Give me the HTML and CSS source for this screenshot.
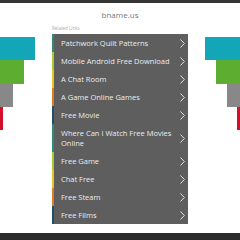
FILE: index.html
```html
<!DOCTYPE html>
<html>
<head>
<meta charset="utf-8">
<link rel="stylesheet" href="styles.css">
</head>
<body>
<div class="page">
  <div class="topbar"></div>
  <div class="title">bname.us</div>
  <div class="main">
    <div class="side side-left">
      <div class="bar cyan w35"></div>
      <div class="bar green w24"></div>
      <div class="bar gray w13"></div>
      <div class="bar red w3"></div>
    </div>
    <div class="center">
      <div class="label">Related Links</div>
      <ul class="links">
        <li class="c1"><span>Patchwork Quilt Patterns</span><svg viewBox="0 0 5 9"><polyline points="0.5,0.5 4.3,4.5 0.5,8.5"/></svg></li>
        <li class="c2"><span>Mobile Android Free Download</span><svg viewBox="0 0 5 9"><polyline points="0.5,0.5 4.3,4.5 0.5,8.5"/></svg></li>
        <li class="c3"><span>A Chat Room</span><svg viewBox="0 0 5 9"><polyline points="0.5,0.5 4.3,4.5 0.5,8.5"/></svg></li>
        <li class="c4"><span>A Game Online Games</span><svg viewBox="0 0 5 9"><polyline points="0.5,0.5 4.3,4.5 0.5,8.5"/></svg></li>
        <li class="c5"><span>Free Movie</span><svg viewBox="0 0 5 9"><polyline points="0.5,0.5 4.3,4.5 0.5,8.5"/></svg></li>
        <li class="c1"><span>Where Can I Watch Free Movies Online</span><svg viewBox="0 0 5 9"><polyline points="0.5,0.5 4.3,4.5 0.5,8.5"/></svg></li>
        <li class="c2"><span>Free Game</span><svg viewBox="0 0 5 9"><polyline points="0.5,0.5 4.3,4.5 0.5,8.5"/></svg></li>
        <li class="c3"><span>Chat Free</span><svg viewBox="0 0 5 9"><polyline points="0.5,0.5 4.3,4.5 0.5,8.5"/></svg></li>
        <li class="c4"><span>Free Steam</span><svg viewBox="0 0 5 9"><polyline points="0.5,0.5 4.3,4.5 0.5,8.5"/></svg></li>
        <li class="c5"><span>Free Films</span><svg viewBox="0 0 5 9"><polyline points="0.5,0.5 4.3,4.5 0.5,8.5"/></svg></li>
      </ul>
    </div>
    <div class="side side-right">
      <div class="bar cyan w35"></div>
      <div class="bar green w24"></div>
      <div class="bar gray w13"></div>
      <div class="bar red w3"></div>
    </div>
  </div>
  <div class="footer"></div>
</div>
</body>
</html>
```
FILE: styles.css
```css
html, body {
  margin: 0;
  padding: 0;
  background: #fff;
}
.page {
  width: 240px;
  height: 240px;
  display: flex;
  flex-direction: column;
  font-family: "Open Sans", "DejaVu Sans", sans-serif;
  overflow: hidden;
}
.topbar {
  height: 3px;
  background: #353535;
}
.title {
  height: 20px;
  line-height: 20px;
  margin-top: 2px;
  text-align: center;
  font-size: 8px;
  color: #777;
}
.main {
  display: flex;
  align-items: flex-start;
}
.side {
  width: 52px;
  padding-top: 12px;
  display: flex;
  flex-direction: column;
}
.side-left { align-items: flex-start; }
.side-right { align-items: flex-end; }
.bar { height: 23.3px; }
.cyan { background: #13a6b6; }
.green { background: #5cad30; }
.gray { background: #888888; }
.red { background: #d2102a; }
.w35 { width: 35px; }
.w24 { width: 24px; }
.w13 { width: 13px; }
.w3 { width: 3px; }
.center {
  width: 136px;
}
.label {
  height: 9px;
  font-size: 4.5px;
  line-height: 7px;
  color: #aaa;
}
.links {
  list-style: none;
  margin: 0;
  padding: 0;
  background: #5e5e5e;
}
.links li {
  display: flex;
  align-items: center;
  min-height: 18px;
  box-sizing: border-box;
  padding: 4px 3px 4px 7px;
  border-left: 2px solid #3a8a6a;
  color: #ececec;
  font-size: 7.5px;
  line-height: 10px;
}
.links li span {
  flex: 1;
  padding-right: 4px;
}
.links li.c1 { border-left-color: #2f8a74; }
.links li.c2 { border-left-color: #a7c83a; }
.links li.c3 { border-left-color: #e5c52a; }
.links li.c4 { border-left-color: #e07b22; }
.links li.c5 { border-left-color: #1f4f6a; }
.links svg {
  width: 5px;
  height: 9px;
  flex: none;
  fill: none;
  stroke: #e0e0e0;
  stroke-width: 1;
}
.footer {
  margin-top: auto;
  height: 7px;
  background: #2c2c2c;
}
```
